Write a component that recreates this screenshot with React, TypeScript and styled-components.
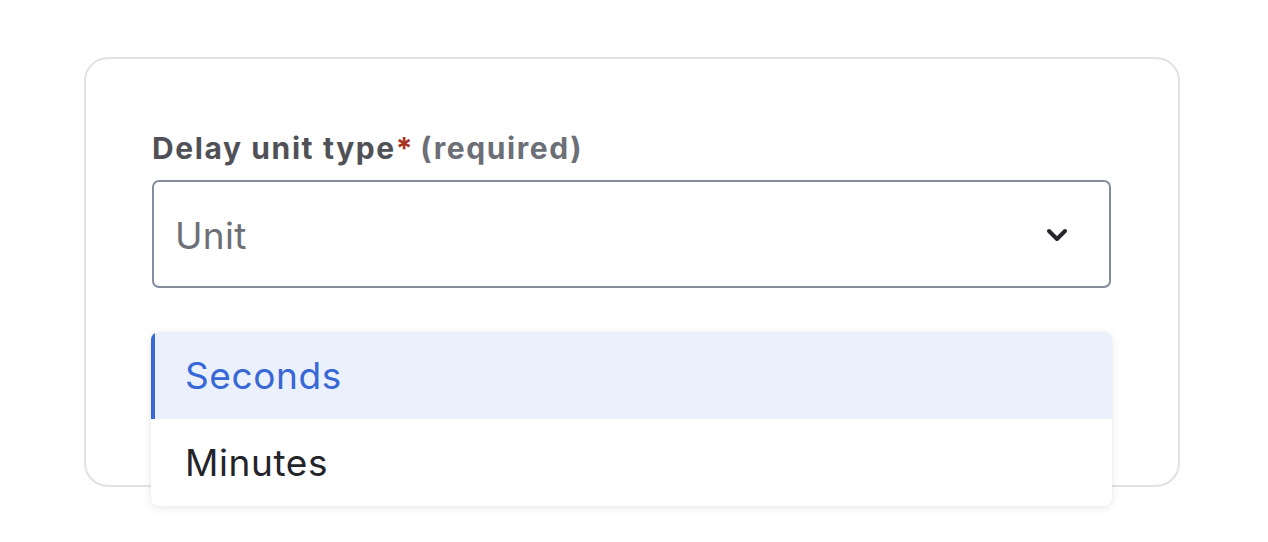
import styled, { createGlobalStyle } from 'styled-components';

const GlobalStyle = createGlobalStyle`
    body {
        margin: 0;
        background: #ffffff;
        font-family: Inter, 'Noto Sans', sans-serif;
    }
`;

const Page = styled.div`
    box-sizing: border-box;
    min-height: 542px;
    padding: 57px 0 0 84px;
`;

const Card = styled.div`
    box-sizing: border-box;
    width: 1096px;
    height: 430px;
    border: 2px solid #e1e2e6;
    border-radius: 24px;
    padding: 71px 67px 0 66px;
`;

const Label = styled.div`
    font-size: 30px;
    font-weight: 700;
    letter-spacing: 1.6px;
    line-height: 36px;
    color: #505157;
    margin-bottom: 14px;
`;

const Star = styled.span`
    color: #a8321e;
`;

const Hint = styled.span`
    color: #6c6f76;
    margin-left: 6px;
`;

const Field = styled.div`
    position: relative;
`;

const Select = styled.div`
    box-sizing: border-box;
    height: 108px;
    border: 2px solid #858d9d;
    border-radius: 7px;
    display: flex;
    align-items: center;
    justify-content: space-between;
    padding: 2px 40px 0 21px;
    font-size: 37px;
    letter-spacing: 0.3px;
    color: #6c6f76;
`;

const Menu = styled.div`
    position: absolute;
    top: 152px;
    left: -1px;
    right: -1px;
    background: #ffffff;
    border-radius: 8px;
    box-shadow: 0 2px 10px rgba(0, 0, 0, 0.09), 0 0 2px rgba(0, 0, 0, 0.06);
    overflow: hidden;
`;

const Option = styled.div<{ $active?: boolean }>`
    height: 87px;
    display: flex;
    align-items: center;
    padding-left: 34px;
    font-size: 37px;
    letter-spacing: 0.6px;
    color: ${(p) => (p.$active ? '#3867d6' : '#23242a')};
    background: ${(p) => (p.$active ? '#eaf0fc' : '#ffffff')};
    box-shadow: ${(p) => (p.$active ? 'inset 4px 0 0 #3867d6' : 'none')};
`;

const Chevron = () => (
    <svg width="24" height="16" viewBox="0 0 24 16">
        <path d="M4 4l8 8 8-8" fill="none" stroke="#26272b" strokeWidth="4" strokeLinecap="round" strokeLinejoin="round" />
    </svg>
);

const App = () => {
    return (
        <>
            <GlobalStyle />
            <Page>
                <Card>
                    <Label>
                        Delay unit type<Star>*</Star>
                        <Hint>(required)</Hint>
                    </Label>
                    <Field>
                        <Select>
                            Unit
                            <Chevron />
                        </Select>
                        <Menu>
                            <Option $active>Seconds</Option>
                            <Option>Minutes</Option>
                        </Menu>
                    </Field>
                </Card>
            </Page>
        </>
    );
};

export default App;
